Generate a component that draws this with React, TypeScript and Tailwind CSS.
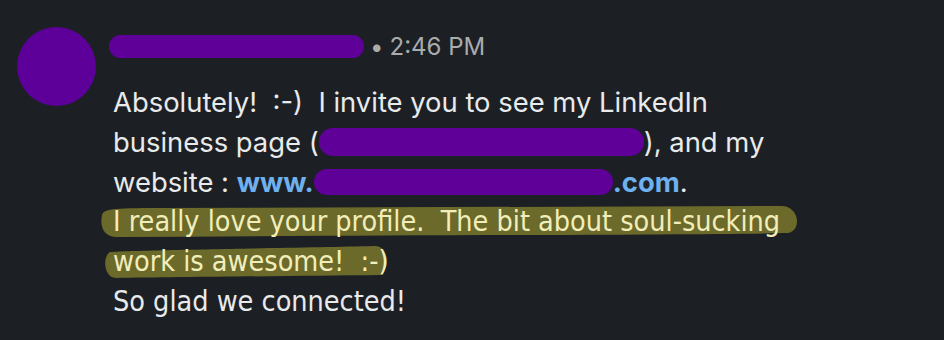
import React from "react";

export default function App() {
  const narrow = { fontFamily: '"DejaVu Sans Condensed", "Liberation Sans Narrow", sans-serif' };
  return (
    <div className="w-[944px] h-[340px] bg-[#1c2024] overflow-hidden font-['Inter',sans-serif]">
      <div className="flex pl-[17px] pt-[27px]">
        <div className="w-[79px] h-[79px] rounded-full bg-[#5c0099] shrink-0" />
        <div className="ml-[13px] flex flex-col">
          <div className="flex items-center h-[23px] mt-[8px]">
            <div className="w-[255px] h-[23px] rounded-full bg-[#5f0099]" />
            <span className="ml-[6px] text-[24px] text-[#a9abad] leading-none">•</span>
            <span className="ml-[6px] text-[24px] text-[#a9abad] leading-none">2:46 PM</span>
          </div>
          <div className="relative mt-[24px] ml-[4px] text-[27.4px] leading-[40px] text-[#e9eaeb]">
            <svg className="absolute left-[-13px] top-[123px]" width="720" height="80" viewBox="0 0 720 80">
              <path d="M2 10 C 4 4, 10 3, 60 3 L 680 1 C 700 0, 702 26, 688 28 C 600 30, 300 30, 20 32 C 2 33, 0 20, 2 10 Z" fill="#6b6a2a" />
              <path d="M10 47 C 30 45, 200 43, 274 41 C 290 40, 290 66, 280 70 C 200 71, 80 72, 16 73 C 4 73, 2 52, 10 47 Z" fill="#6b6a2a" />
            </svg>
            <div className="relative">Absolutely!&nbsp; :-)&nbsp; I invite you to see my LinkedIn</div>
            <div className="relative flex items-center">
              <span>business page (</span>
              <span className="inline-block w-[325px] h-[28px] rounded-full bg-[#5f0099]" />
              <span>), and my</span>
            </div>
            <div className="relative flex items-center">
              <span>website :&nbsp;</span>
              <span className="text-[#6fb1ef] font-bold">www.</span>
              <span className="inline-block w-[299px] h-[26px] rounded-full bg-[#5f0099]" />
              <span className="text-[#6fb1ef] font-bold">.com</span>
              <span>.</span>
            </div>
            <div className="relative text-[28.5px] text-[#f2eebb]" style={narrow}>I really love your profile.&nbsp; The bit about soul-sucking</div>
            <div className="relative text-[28.5px] text-[#f2eebb]" style={narrow}>work is awesome!&nbsp; :-)</div>
            <div className="relative text-[28.5px]" style={narrow}>So glad we connected!</div>
          </div>
        </div>
      </div>
    </div>
  );
}
